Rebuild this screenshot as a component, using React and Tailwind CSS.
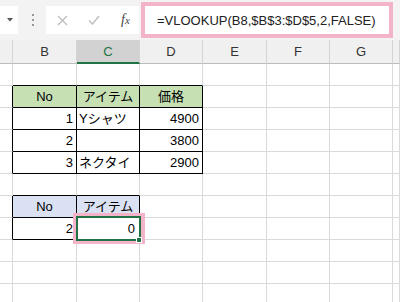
import React from "react";

const COLS = ["", "B", "C", "D", "E", "F", "G", ""];
const NROWS = 11;

const data = {
  "2-1": { t: "No", a: "c" },
  "2-2": { t: "アイテム", a: "c" },
  "2-3": { t: "価格", a: "c" },
  "3-1": { t: "1", a: "r" },
  "3-2": { t: "Yシャツ", a: "l" },
  "3-3": { t: "4900", a: "r" },
  "4-1": { t: "2", a: "r" },
  "4-3": { t: "3800", a: "r" },
  "5-1": { t: "3", a: "r" },
  "5-2": { t: "ネクタイ", a: "l" },
  "5-3": { t: "2900", a: "r" },
  "7-1": { t: "No", a: "c" },
  "7-2": { t: "アイテム", a: "c" },
  "8-1": { t: "2", a: "r" },
  "8-2": { t: "0", a: "r" },
};

function inT(r, c) {
  if (r >= 2 && r <= 5 && c >= 1 && c <= 3) return true;
  if (r >= 7 && r <= 8 && c >= 1 && c <= 2) return true;
  return false;
}

function bg(r, c) {
  if (r === 2 && c >= 1 && c <= 3) return "bg-[#c6e0b4]";
  if (r === 7 && c >= 1 && c <= 2) return "bg-[#d9e1f2]";
  return "bg-white";
}

function Cell({ r, c }) {
  const rb = inT(r, c) || inT(r, c + 1);
  const bb = inT(r, c) || inT(r + 1, c);
  const d = data[`${r}-${c}`];
  const sel = r === 8 && c === 2;
  const align = d
    ? d.a === "c"
      ? "justify-center"
      : d.a === "r"
      ? "justify-end pr-[3px]"
      : "justify-start pl-[2px]"
    : "";
  return (
    <div
      className={[
        "relative flex items-center border-r border-b text-[13px] leading-none text-black whitespace-nowrap",
        rb ? "border-r-black" : "border-r-[#dadada]",
        bb ? "border-b-black" : "border-b-[#dadada]",
        bg(r, c),
        align,
      ].join(" ")}
    >
      {d && <span className={sel ? "pr-[1px]" : ""}>{d.t}</span>}
      {sel && (
        <>
          <div className="absolute -left-[4px] -top-[5px] -right-[6px] -bottom-[5px] border-4 border-[#f3b3c8] z-10 pointer-events-none" />
          <div className="absolute -left-[1px] -top-[2px] -right-[2px] -bottom-[2px] border-2 border-[#217346] z-20 pointer-events-none" />
          <div className="absolute -right-[3px] -bottom-[4px] w-[6px] h-[6px] bg-[#217346] border border-white z-30" />
        </>
      )}
    </div>
  );
}

export default function App() {
  const rows = [];
  for (let r = 1; r <= NROWS; r++) {
    for (let c = 0; c < COLS.length; c++) {
      rows.push(<Cell key={`${r}-${c}`} r={r} c={c} />);
    }
  }
  return (
    <div className="w-[400px] h-[302px] overflow-hidden bg-white font-['Liberation_Sans','Noto_Sans_CJK_JP',sans-serif]">
      {/* toolbar */}
      <div className="h-[40px] bg-[#f3f3f3] flex items-center">
        <div className="w-[18px] h-[28px] bg-white flex items-center pl-[7px]">
          <svg width="6" height="4" viewBox="0 0 6 4">
            <path d="M0 0 L6 0 L3 3.5 Z" fill="#555" />
          </svg>
        </div>
        <div className="ml-[14px] flex flex-col gap-[3px]">
          <div className="w-[2px] h-[2px] bg-[#9a9a9a]" />
          <div className="w-[2px] h-[2px] bg-[#9a9a9a]" />
          <div className="w-[2px] h-[2px] bg-[#9a9a9a]" />
        </div>
        <div className="ml-[12px] w-[93px] h-[28px] bg-white flex items-center">
          <svg className="ml-[11px]" width="11" height="11" viewBox="0 0 11 11">
            <path d="M1 1 L10 10 M10 1 L1 10" stroke="#bdbdbd" strokeWidth="1.3" />
          </svg>
          <svg className="ml-[20px]" width="12" height="10" viewBox="0 0 12 10">
            <path d="M1 5.5 L4.5 9 L11 1" stroke="#bdbdbd" strokeWidth="1.4" fill="none" />
          </svg>
          <span className="ml-[21px] text-[14px] italic text-[#444] font-['Liberation_Serif',serif] leading-none">
            f<span className="text-[11px]">x</span>
          </span>
        </div>
        <div className="ml-[2px] w-[252px] h-[36px] border-4 border-[#f3b3c8] bg-white flex items-center pl-[12px]">
          <span className="text-[13px] text-[#222] whitespace-nowrap leading-none">
            =VLOOKUP(B8,$B$3:$D$5,2,FALSE)
          </span>
        </div>
      </div>
      {/* column headers */}
      <div className="grid grid-cols-[13px_64px_63px_63px_64px_63px_63px_7px] h-[24px]">
        {COLS.map((l, i) => (
          <div
            key={i}
            className={[
              "flex items-center justify-center border-r border-r-[#d4d4d4] text-[13px] leading-none",
              i === 2
                ? "bg-[#d2d2d2] text-[#217346] border-b-2 border-b-[#217346]"
                : "bg-[#f0f0f0] text-[#333] border-b border-b-[#bdbdbd]",
            ].join(" ")}
          >
            {l}
          </div>
        ))}
      </div>
      {/* sheet grid */}
      <div className="grid grid-cols-[13px_64px_63px_63px_64px_63px_63px_7px] auto-rows-[22px]">
        {rows}
      </div>
    </div>
  );
}
